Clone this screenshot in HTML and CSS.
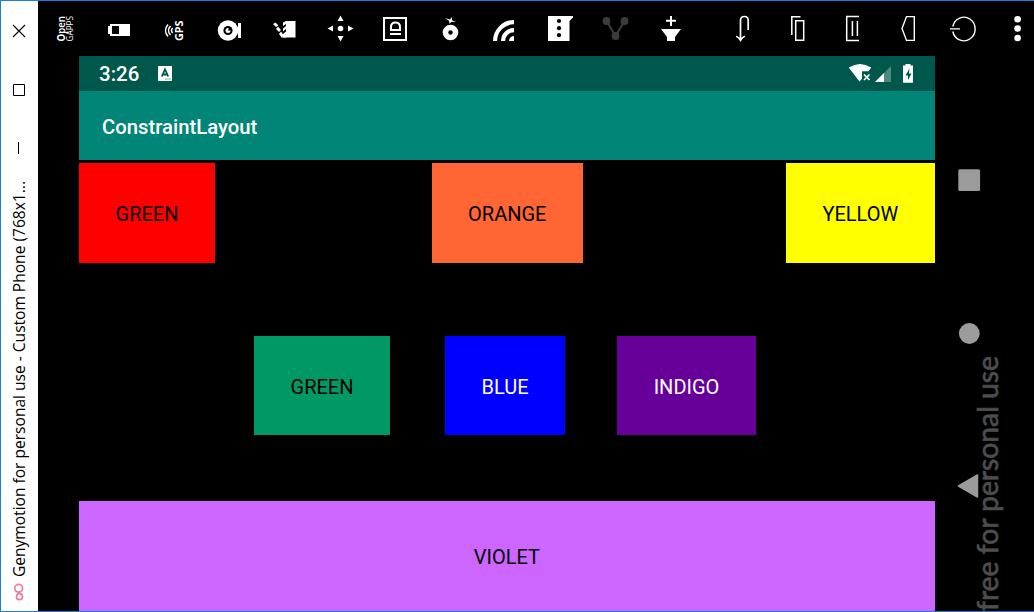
FILE: index.html
```html
<!DOCTYPE html>
<html lang="en">
<head>
<meta charset="utf-8">
<title>Genymotion for personal use</title>
<link rel="stylesheet" href="styles.css">
</head>
<body>
<div class="window">
  <aside class="titlebar">
    <svg class="title-svg" viewBox="1 1 37 610">
      <g fill="none" stroke="#000" stroke-width="1.1">
        <path d="M13 25l12 12M25 25L13 37"/>
        <path stroke-width="1" d="M13.500 84.500h11v11h-11zM18.500 142v12"/>
      </g>
      <text class="title" transform="translate(25 577) rotate(-90)" textLength="396" lengthAdjust="spacingAndGlyphs">Genymotion for personal use - Custom Phone (768x1...</text>
      <g fill="none" stroke="#ee7d9c" stroke-width="1.7"><circle cx="18.700" cy="588.300" r="3.900"/><circle cx="19.500" cy="596.700" r="3"/></g>
    </svg>
  </aside>
  <main class="emulator">
    <header class="toolbar">
      <svg viewBox="50 1 30 55"><text class="open" transform="translate(65 41.500) rotate(-90)" textLength="25.500" lengthAdjust="spacingAndGlyphs"><tspan font-weight="700">O</tspan>pen</text><text class="gapps" transform="translate(73 41.500) rotate(-90)" textLength="25.500" lengthAdjust="spacingAndGlyphs">GAPPS</text></svg>
      <svg viewBox="104 1 30 55"><path fill-rule="evenodd" d="M110 24h20v12h-20v-2h-2v-8h2zM112 26v8h7v-8z"/></svg>
      <svg viewBox="159 1 30 55"><g class="line" stroke-width="1.500"><path d="M168 24.500q-5 6 0 12M170.500 26q-4 4.500 0 9M172.700 28q-2.500 2.500 0 5"/></g><text class="gps" transform="translate(182.800 41) rotate(-90)" textLength="20.500" lengthAdjust="spacingAndGlyphs">GPS</text></svg>
      <svg viewBox="214 1 30 55"><circle cx="228" cy="30.500" r="10.200"/><path d="M236 28h2v-5h3v15h-3v-5h-2z"/><circle cx="228" cy="30.500" r="4.600" fill="#000"/><circle cx="228" cy="30.500" r="2.500"/><path fill="#000" d="M228 30.500h3v-3h-2z"/></svg>
      <svg viewBox="270 1 30 55"><path d="M286 21h9.500v16.500H282l4-4z"/><path d="M273 24l2.500-1.500 3 3-2.500 1.500zM276 29l2-2.500 3 3.500-2 2zM279 34l2-2.500 2.500 3.500-1.500 3z"/><path d="M283 22.500l3-1.500v3l-3 2zM283 28.500l3-2.500v3l-3 2.500zM283 34l3-2.500v6h-3z"/></svg>
      <svg viewBox="325 1 30 55"><circle cx="340.500" cy="28.500" r="2.800"/><path d="M340.500 15.500l3 5.500h-6zM340.500 41.500l3-5.500h-6zM327.500 28.500l5.500-3v6zM353.500 28.500l-5.500-3v6z"/></svg>
      <svg viewBox="380 1 30 55"><g class="line" stroke-width="2"><path d="M384 18h22v22h-22z"/><path d="M390 34h11"/><path d="M391 30v-3q0-4.500 4.500-4.500T400 27v3z"/></g></svg>
      <svg viewBox="435 1 30 55"><circle cx="450.500" cy="32.500" r="7.800"/><circle cx="450.500" cy="32.500" r="2.200" fill="#000"/><path d="M445 18l5 1.500 2-2.500v3.200l4 1.800-4.500-.2-2 2-.5-3z"/></svg>
      <svg viewBox="490 1 30 55"><g class="line" stroke-width="4.200"><path d="M495.100 41A18.900 18.900 0 0 1 514 22.100M503.100 41A10.900 10.900 0 0 1 514 30.100"/></g><path d="M509 41a5 5 0 0 1 5-5v5z"/></svg>
      <svg viewBox="545 1 30 55"><path d="M548 16h25v1.500l-3.500 3.500v20H548z"/><g fill="#000"><circle cx="559" cy="21" r="2.100"/><circle cx="559" cy="28.200" r="2.100"/><circle cx="559" cy="35.200" r="2.100"/></g></svg>
      <svg viewBox="600 1 30 55"><g fill="#3c3c3a"><circle cx="606.500" cy="21" r="3.900"/><circle cx="624.500" cy="21" r="3.900"/><circle cx="615.500" cy="36" r="3.900"/></g><path fill="none" stroke="#3c3c3a" stroke-width="2" d="M606.500 21l9 15 9-15"/></svg>
      <svg viewBox="656 1 30 55"><path d="M661 29h20l-6 8v4h-8v-4z"/><path class="line" stroke-width="2" d="M671 16v10M666 20.700h10"/></svg>
      <svg viewBox="727 1 30 55"><path class="line" stroke-width="1.700" d="M748.200 30V20.500q0-4-3.800-4t-3.900 4V40M736.200 36.300q2.500 1 4.300 4q1.700-3 4.300-4"/></svg>
      <svg viewBox="783 1 30 55"><path class="line" stroke-width="1.500" d="M800.500 16.700H791.800V35M795.700 20.700h8v19.600h-8z"/></svg>
      <svg viewBox="838 1 30 55"><path class="line" stroke-width="1.500" d="M859 16.600H846.700v23.800H859M852.400 21v15M857.400 21v15"/></svg>
      <svg viewBox="893 1 30 55"><path class="line" stroke-width="1.400" d="M914.300 16.600H906.500L902 28.500l4.500 11.900h7.800z"/></svg>
      <svg viewBox="948 1 30 55"><path class="line" stroke-width="1.400" d="M952.800 26.500a11.300 11.800 0 1 1 0 5M950 28.900h10"/></svg>
      <svg viewBox="1003 1 30 55"><circle cx="1017.600" cy="19.200" r="3.300"/><circle cx="1017.600" cy="28.500" r="3.300"/><circle cx="1017.600" cy="38" r="3.300"/></svg>
    </header>
    <div class="device">
      <section class="screen">
        <div class="status">
          <span class="clock">3:26</span>
          <svg class="badge" viewBox="0 0 14 15"><rect width="14" height="15" rx=".8" fill="#fff"/><path fill="none" stroke="#00574b" stroke-width="1.800" d="M3.800 10.500L7 3.500l3.200 7M4.700 8.500h4.600"/><path stroke="#00574b" stroke-opacity=".6" stroke-width=".8" d="M7 13h6"/></svg>
          <svg class="status-icons" viewBox="848 56 67 35"><path fill="#fff" d="M848.700 67.500Q860 60.500 871.300 67.500L868.500 71.200H862v7.500L859.500 81.500z"/><path stroke="#fff" stroke-width="1.700" d="M864 74.500l5.500 5.500M869.500 74.500L864 80"/><path fill="#fff" fill-opacity=".3" d="M891 66v16h-16z"/><path fill="#fff" d="M884 73v9h-9z"/><path fill="#fff" d="M905.500 65.500v-1.500h5v1.500h2.500v17.200h-10V65.500z"/><path fill="#00574b" d="M909.500 68.500l-4 7h2.500v4.500l3.500-6.500h-2.500z"/></svg>
        </div>
        <div class="appbar">ConstraintLayout</div>
        <div class="content">
          <div class="row top"><div class="tile red">GREEN</div><div class="tile orange">ORANGE</div><div class="tile yellow">YELLOW</div></div>
          <div class="row middle"><div class="tile green">GREEN</div><div class="tile blue">BLUE</div><div class="tile indigo">INDIGO</div></div>
          <div class="tile violet">VIOLET</div>
        </div>
      </section>
      <svg class="nav" viewBox="935 56 99 555">
        <g fill="#9b9b9b"><rect x="958.300" y="169.300" width="21.800" height="21.800" rx="1.500"/><circle cx="969.300" cy="333.500" r="10.400"/><path stroke="#9b9b9b" stroke-width="1.500" stroke-linejoin="round" d="M958.500 486l19-11v22z"/></g>
        <text class="watermark" transform="translate(998 611) rotate(-90)" textLength="255" lengthAdjust="spacingAndGlyphs">free for personal use</text>
      </svg>
    </div>
  </main>
</div>
</body>
</html>
```
FILE: styles.css
```css
* { box-sizing: border-box; }
body { margin: 0; background: #000; font-family: Roboto, sans-serif; }
svg { display: block; }
.window {
  display: grid;
  grid-template-columns: 37px 1fr;
  width: 1034px;
  height: 612px;
  overflow: hidden;
  border: solid #1b7fd4;
  border-width: 1px 0 1px 1px;
  background: #000;
}
.titlebar { background: #fff; }
.title-svg { width: 37px; height: 610px; }
.title { font: 15.5px "Open Sans", sans-serif; fill: #000; }
.emulator { display: grid; grid-template-rows: 55px 555px; }
.toolbar {
  display: grid;
  grid-template-columns: 54px 55px 55px 56px 55px 55px 55px 55px 55px 55px 56px 71px 56px 55px 55px 55px 55px 31px;
  padding-left: 12px;
}
.toolbar svg { width: 30px; height: 55px; fill: #fff; }
.toolbar .line { fill: none; stroke: #fff; }
.open { font: 600 10.5px "Open Sans", sans-serif; }
.gapps { font: 8.2px "Open Sans", sans-serif; }
.gps { font: 700 9.7px "Open Sans", sans-serif; }
.device { display: grid; grid-template-columns: 856px 99px; padding-left: 41px; }
.screen { width: 855.7px; }
.status {
  display: flex;
  align-items: center;
  height: 35px;
  padding: 0 20px;
  background: #00574b;
  color: #fff;
}
.clock { width: 59px; font-size: 20.5px; font-weight: 500; line-height: 35px; padding-top: 2px; }
.badge { width: 14px; height: 15px; }
.status-icons { width: 67px; height: 35px; margin-left: auto; }
.appbar {
  height: 69px;
  padding-left: 23px;
  background: #008577;
  color: #fff;
  font-size: 20.3px;
  font-weight: 500;
  line-height: 72px;
}
.content { padding-top: 3px; }
.row { display: grid; }
.top { grid-template-columns: 352.5px 354.5px 148.7px; height: 100px; }
.red { width: 136px; }
.orange { width: 151.5px; }
.middle {
  grid-template-columns: 136px 120px 139px;
  column-gap: 55px;
  height: 99.5px;
  margin: 72.5px 0 65.5px;
  padding-left: 175px;
}
.tile {
  display: flex;
  align-items: center;
  justify-content: center;
  padding-top: 2px;
  color: #000;
  font-size: 20px;
}
.middle .tile { padding-top: 3px; }
.red { background: #f00; }
.orange { background: #f63; }
.yellow { background: #ff0; }
.green { background: #096; }
.blue { background: #00f; color: #fff; }
.indigo { margin-left: -3px; margin-right: 3px; background: #609; color: #fff; }
.violet { height: 110px; background: #c6f; }
.nav { width: 99px; height: 555px; }
.watermark { font: 28px Lato, sans-serif; fill: #4d4d4d; stroke: #4d4d4d; stroke-width: .7px; }
```
